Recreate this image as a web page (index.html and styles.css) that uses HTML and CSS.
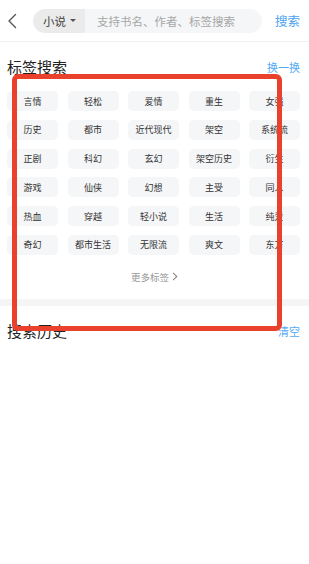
FILE: index.html
```html
<!DOCTYPE html>
<html lang="zh">
<head>
<meta charset="utf-8">
<link rel="stylesheet" href="styles.css">
</head>
<body>
<div class="page">
  <header class="top">
    <div class="back">
      <svg width="10" height="16" viewBox="0 0 10 16"><path d="M8.5 1.5 L2 8 L8.5 14.5" fill="none" stroke="#555" stroke-width="1.4" stroke-linecap="round" stroke-linejoin="round"/></svg>
    </div>
    <div class="pill">
      <div class="chip"><span>小说</span><span class="caret"></span></div>
      <span class="ph">支持书名、作者、标签搜索</span>
    </div>
    <span class="go">搜索</span>
  </header>

  <div class="sec-head">
    <span class="sec-title">标签搜索</span>
    <span class="link">换一换</span>
  </div>

  <div class="tags">
    <span class="tag">言情</span><span class="tag">轻松</span><span class="tag">爱情</span><span class="tag">重生</span><span class="tag">女强</span>
    <span class="tag">历史</span><span class="tag">都市</span><span class="tag">近代现代</span><span class="tag">架空</span><span class="tag">系统流</span>
    <span class="tag">正剧</span><span class="tag">科幻</span><span class="tag">玄幻</span><span class="tag">架空历史</span><span class="tag">衍生</span>
    <span class="tag">游戏</span><span class="tag">仙侠</span><span class="tag">幻想</span><span class="tag">主受</span><span class="tag">同人</span>
    <span class="tag">热血</span><span class="tag">穿越</span><span class="tag">轻小说</span><span class="tag">生活</span><span class="tag">纯爱</span>
    <span class="tag">奇幻</span><span class="tag">都市生活</span><span class="tag">无限流</span><span class="tag">爽文</span><span class="tag">东方</span>
  </div>

  <div class="more">更多标签
    <svg width="6" height="9" viewBox="0 0 6 9"><path d="M1 0.8 L4.8 4.5 L1 8.2" fill="none" stroke="#888" stroke-width="1.1"/></svg>
  </div>

  <div class="band"></div>

  <div class="sec-head hist">
    <span class="sec-title">搜索历史</span>
    <span class="link">清空</span>
  </div>

  <div class="mark"></div>
</div>
</body>
</html>
```

FILE: styles.css
```css
* { box-sizing: border-box; }
html, body { margin: 0; padding: 0; background: #fff; }
body {
  font-family: "Noto Sans CJK SC", "Noto Sans", sans-serif;
  color: #222;
}
.page { position: relative; width: 309px; height: 564px; overflow: hidden; }

.top {
  height: 42px;
  display: flex;
  align-items: center;
  padding: 0 9px 0 7px;
  border-bottom: 1px solid #f1f1f1;
}
.back { width: 26px; display: flex; align-items: center; }
.back svg { display: block; }
.pill {
  width: 229px;
  height: 24px;
  border-radius: 12px;
  background: #f5f6f8;
  display: flex;
  align-items: center;
  overflow: hidden;
}
.chip {
  width: 52px;
  height: 24px;
  background: #ebebeb;
  border-radius: 12px 0 0 12px;
  display: flex;
  align-items: center;
  padding-left: 10px;
  font-size: 11.5px;
  color: #444;
}
.caret {
  width: 0; height: 0;
  margin-left: 4px;
  border-left: 3px solid transparent;
  border-right: 3px solid transparent;
  border-top: 3.5px solid #555;
}
.ph { margin-left: 12px; font-size: 11.5px; color: #a6a6a6; white-space: nowrap; }
.go { margin-left: auto; font-size: 12.5px; color: #4aa2f3; }

.sec-head {
  display: flex;
  justify-content: space-between;
  align-items: center;
  padding: 0 9px 0 7px;
  margin-top: 15px;
  height: 20px;
}
.sec-title { font-size: 15px; line-height: 20px; color: #222; }
.link { font-size: 11px; color: #55aaf3; }

.tags {
  margin-top: 14px;
  padding: 0 9px 0 7px;
  display: grid;
  grid-template-columns: repeat(5, 51px);
  column-gap: 9.5px;
  row-gap: 8.8px;
}
.tag {
  height: 20px;
  border-radius: 5px;
  background: #f5f6f8;
  font-size: 9px;
  color: #333;
  display: flex;
  align-items: center;
  justify-content: center;
  white-space: nowrap;
}

.more {
  margin-top: 15px;
  height: 14px;
  display: flex;
  align-items: center;
  justify-content: center;
  gap: 3px;
  font-size: 9.5px;
  color: #999;
}
.more svg { display: block; }

.band { margin-top: 15px; height: 7px; background: #f5f5f5; }

.hist { margin-top: 15px; }

.mark {
  position: absolute;
  left: 12px;
  top: 74px;
  width: 270px;
  height: 257px;
  border: 5px solid #ea412c;
  border-radius: 6px;
  pointer-events: none;
}
```
